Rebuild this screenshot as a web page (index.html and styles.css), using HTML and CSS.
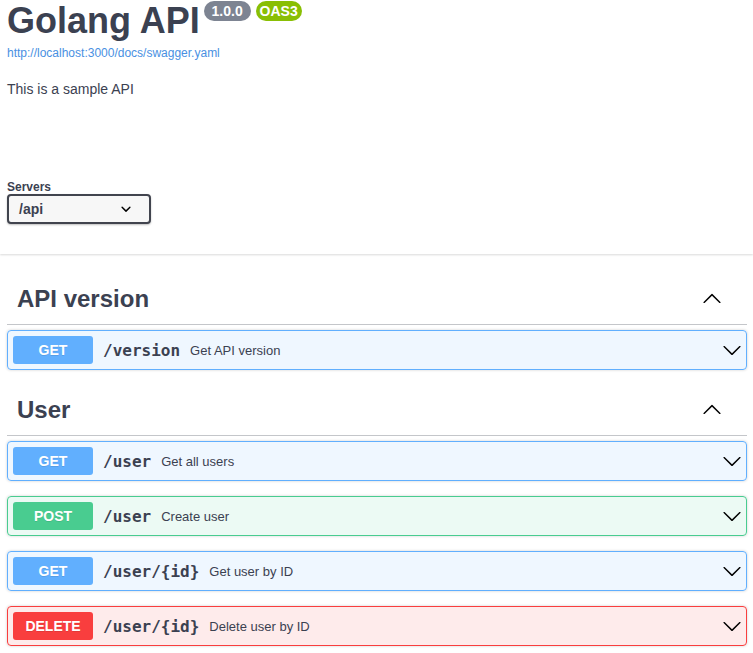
FILE: index.html
```html
<!DOCTYPE html>
<html lang="en">
<head>
<meta charset="utf-8">
<title>Golang API</title>
<link rel="stylesheet" href="styles.css">
</head>
<body>
<div class="top">
  <div class="info">
    <h2 class="title">
      <span class="title-text">Golang API</span>
      <span class="badge badge-version"> 1.0.0 </span>
      <span class="badge badge-oas">OAS3</span>
    </h2>
    <a class="link" href="#">http://localhost:3000/docs/swagger.yaml</a>
    <p class="desc">This is a sample API</p>
  </div>
  <div class="servers">
    <span class="servers-label">Servers</span>
    <div class="select">
      <span>/api</span>
      <svg class="select-arrow" viewBox="0 0 20 20" width="20" height="20"><path d="M13.418 7.859a.695.695 0 01.978 0 .68.68 0 010 .969l-3.908 3.83a.697.697 0 01-.979 0l-3.908-3.83a.68.68 0 010-.969.695.695 0 01.978 0L10 11l3.418-3.141z"/></svg>
    </div>
  </div>
</div>

<div class="ops">
  <section class="tag-section">
    <h3 class="tag">
      <span>API version</span>
      <svg class="tag-arrow" viewBox="0 0 20 20" width="20" height="20"><path d="M17.418 14.908c.272.268.709.268.979 0s.271-.701 0-.969l-7.908-7.83a.697.697 0 00-.979 0l-7.908 7.83c-.27.268-.27.701 0 .969.271.268.709.268.979 0L10 7.665l7.418 7.243z"/></svg>
    </h3>
    <div class="opblock op-get">
      <div class="summary">
        <span class="method">GET</span>
        <span class="path">/version</span>
        <span class="summary-desc">Get API version</span>
        <svg class="op-arrow" viewBox="0 0 20 20" width="20" height="20"><path d="M17.418 6.109c.272-.268.709-.268.979 0s.271.701 0 .969l-7.908 7.83c-.27.268-.707.268-.979 0l-7.908-7.83c-.27-.268-.27-.701 0-.969.271-.268.709-.268.979 0L10 13.25l7.418-7.141z"/></svg>
      </div>
    </div>
  </section>

  <section class="tag-section">
    <h3 class="tag">
      <span>User</span>
      <svg class="tag-arrow" viewBox="0 0 20 20" width="20" height="20"><path d="M17.418 14.908c.272.268.709.268.979 0s.271-.701 0-.969l-7.908-7.83a.697.697 0 00-.979 0l-7.908 7.83c-.27.268-.27.701 0 .969.271.268.709.268.979 0L10 7.665l7.418 7.243z"/></svg>
    </h3>
    <div class="opblock op-get">
      <div class="summary">
        <span class="method">GET</span>
        <span class="path">/user</span>
        <span class="summary-desc">Get all users</span>
        <svg class="op-arrow" viewBox="0 0 20 20" width="20" height="20"><path d="M17.418 6.109c.272-.268.709-.268.979 0s.271.701 0 .969l-7.908 7.83c-.27.268-.707.268-.979 0l-7.908-7.83c-.27-.268-.27-.701 0-.969.271-.268.709-.268.979 0L10 13.25l7.418-7.141z"/></svg>
      </div>
    </div>
    <div class="opblock op-post">
      <div class="summary">
        <span class="method">POST</span>
        <span class="path">/user</span>
        <span class="summary-desc">Create user</span>
        <svg class="op-arrow" viewBox="0 0 20 20" width="20" height="20"><path d="M17.418 6.109c.272-.268.709-.268.979 0s.271.701 0 .969l-7.908 7.83c-.27.268-.707.268-.979 0l-7.908-7.83c-.27-.268-.27-.701 0-.969.271-.268.709-.268.979 0L10 13.25l7.418-7.141z"/></svg>
      </div>
    </div>
    <div class="opblock op-get">
      <div class="summary">
        <span class="method">GET</span>
        <span class="path">/user/{id}</span>
        <span class="summary-desc">Get user by ID</span>
        <svg class="op-arrow" viewBox="0 0 20 20" width="20" height="20"><path d="M17.418 6.109c.272-.268.709-.268.979 0s.271.701 0 .969l-7.908 7.83c-.27.268-.707.268-.979 0l-7.908-7.83c-.27-.268-.27-.701 0-.969.271-.268.709-.268.979 0L10 13.25l7.418-7.141z"/></svg>
      </div>
    </div>
    <div class="opblock op-delete">
      <div class="summary">
        <span class="method">DELETE</span>
        <span class="path">/user/{id}</span>
        <span class="summary-desc">Delete user by ID</span>
        <svg class="op-arrow" viewBox="0 0 20 20" width="20" height="20"><path d="M17.418 6.109c.272-.268.709-.268.979 0s.271.701 0 .969l-7.908 7.83c-.27.268-.707.268-.979 0l-7.908-7.83c-.27-.268-.27-.701 0-.969.271-.268.709-.268.979 0L10 13.25l7.418-7.141z"/></svg>
      </div>
    </div>
  </section>
</div>
</body>
</html>
```

FILE: styles.css
```css
html, body {
  margin: 0;
  padding: 0;
  background: #fff;
}

body {
  font-family: "Liberation Sans", Arial, sans-serif;
  color: #3b4151;
  overflow: hidden;
}

.top {
  padding: 0 7px 30px;
  background: #fff;
  box-shadow: 0 1px 2px 0 rgba(0, 0, 0, 0.15);
}

.title {
  display: flex;
  align-items: flex-start;
  margin: 0;
  font-size: 36px;
  line-height: 41px;
  font-weight: 700;
  color: #3b4151;
}

.title-text {
  margin-right: -1px;
}

.badge {
  margin: 1px 0 0 5px;
  padding: 2px 4px;
  border-radius: 57px;
  font-size: 14px;
  line-height: 16px;
  font-weight: 700;
  color: #fff;
  white-space: pre;
}

.badge-version {
  background: #7d8492;
}

.badge-oas {
  background: #89bf04;
}

.link {
  display: block;
  margin-top: 5px;
  font-size: 12px;
  line-height: 14px;
  color: #4990e2;
  text-decoration: none;
}

.desc {
  margin: 21px 0 0;
  font-size: 14px;
  line-height: 16px;
}

.servers {
  margin-top: 83px;
}

.servers-label {
  display: block;
  font-size: 12px;
  line-height: 14px;
  font-weight: 700;
  margin-bottom: 0;
}

.select {
  display: flex;
  align-items: center;
  justify-content: space-between;
  box-sizing: border-box;
  width: 144px;
  height: 30px;
  padding: 0 10px;
  border: 2px solid #41444e;
  border-radius: 4px;
  background: #f7f7f7;
  box-shadow: 0 1px 2px 0 rgba(0, 0, 0, 0.25);
  font-size: 14px;
  line-height: 16px;
  font-weight: 700;
}

.select-arrow {
  display: block;
  fill: #000;
  margin-right: 3px;
}

.ops {
  padding: 20px 6px 0 7px;
}

.tag {
  display: flex;
  align-items: center;
  margin: 0 0 5px;
  padding: 10px 20px 10px 10px;
  border-bottom: 1px solid rgba(59, 65, 81, 0.3);
  font-size: 24px;
  line-height: 30px;
  font-weight: 700;
  color: #3b4151;
}

.tag-arrow {
  margin-left: auto;
  margin-right: 5px;
  margin-bottom: 3px;
  fill: #000;
}

.opblock {
  margin: 0 0 15px;
  border: 1px solid;
  border-radius: 4px;
  box-shadow: 0 0 3px rgba(0, 0, 0, 0.19);
}

.summary {
  display: flex;
  align-items: center;
  padding: 5px;
}

.method {
  min-width: 80px;
  padding: 6px 0;
  border-radius: 3px;
  text-align: center;
  font-size: 14px;
  line-height: 16px;
  font-weight: 700;
  color: #fff;
  text-shadow: 0 1px 0 rgba(0, 0, 0, 0.1);
}

.path {
  padding: 0 10px;
  font-family: "DejaVu Sans Mono", monospace;
  font-size: 16px;
  font-weight: 600;
  color: #3b4151;
}

.summary-desc {
  font-size: 13px;
  color: #3b4151;
}

.op-arrow {
  margin-left: auto;
  margin-right: -1px;
  fill: #000;
}

.op-get {
  background: rgba(97, 175, 254, 0.1);
  border-color: #61affe;
}

.op-get .method {
  background: #61affe;
}

.op-post {
  background: rgba(73, 204, 144, 0.1);
  border-color: #49cc90;
}

.op-post .method {
  background: #49cc90;
}

.op-delete {
  background: rgba(249, 62, 62, 0.1);
  border-color: #f93e3e;
}

.op-delete .method {
  background: #f93e3e;
}
```
